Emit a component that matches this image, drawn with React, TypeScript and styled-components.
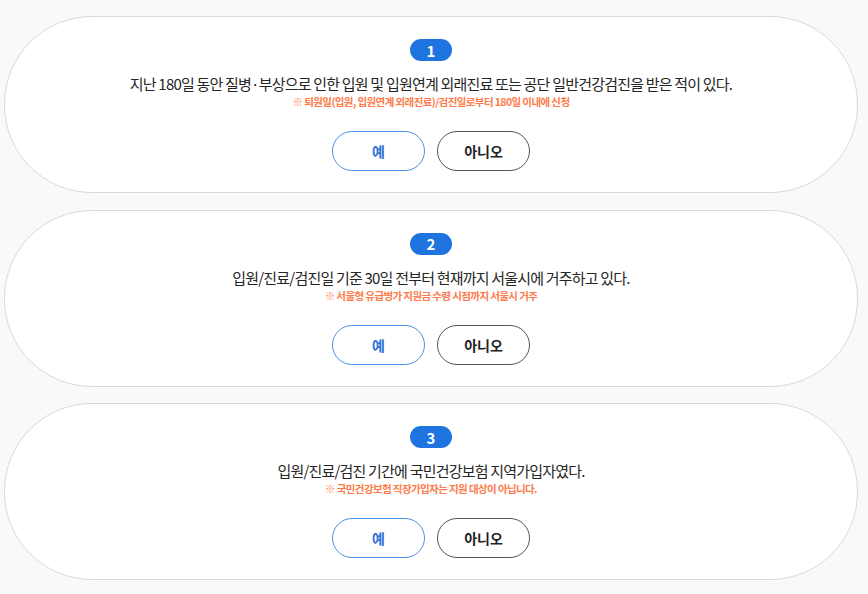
import React from "react";
import styled, { createGlobalStyle } from "styled-components";

const GlobalStyle = createGlobalStyle`
  html, body {
    margin: 0;
    padding: 0;
    background: #f9f9f9;
    font-family: "Noto Sans CJK KR", "Noto Sans", sans-serif;
  }
`;

const Page = styled.div`
  display: flex;
  flex-direction: column;
  gap: 16.5px;
  padding: 16px 10px 0 4px;
`;

const Card = styled.section`
  height: 177px;
  box-sizing: border-box;
  background: #fff;
  border: 1px solid #d9d9d9;
  border-radius: 88px;
  display: flex;
  flex-direction: column;
  align-items: center;
  padding-top: 22px;
`;

const Badge = styled.span`
  width: 42px;
  height: 22px;
  border-radius: 11px;
  background: #1f75e0;
  color: #fff;
  font-size: 15px;
  font-weight: 700;
  display: flex;
  align-items: center;
  justify-content: center;
`;

const Question = styled.p`
  margin: 13px 0 0;
  font-size: 15px;
  line-height: 20px;
  letter-spacing: -0.8px;
  color: #252525;
`;

const Note = styled.p`
  margin: 0;
  font-size: 10.5px;
  line-height: 15px;
  font-weight: 700;
  letter-spacing: -0.6px;
  color: #ff7a4a;
`;

const Actions = styled.div`
  display: flex;
  gap: 12px;
  margin-top: 22px;
`;

const Choice = styled.button<{ $primary?: boolean }>`
  width: 93px;
  height: 40px;
  box-sizing: border-box;
  border-radius: 20px;
  background: #fff;
  border: 1px solid ${(p) => (p.$primary ? "#4a90e6" : "#555")};
  color: ${(p) => (p.$primary ? "#2a6fd8" : "#222")};
  font-family: inherit;
  font-size: 14px;
  font-weight: 700;
  cursor: pointer;
`;

const questions = [
  {
    text: "지난 180일 동안 질병·부상으로 인한 입원 및 입원연계 외래진료 또는 공단 일반건강검진을 받은 적이 있다.",
    note: "※ 퇴원일(입원, 입원연계 외래진료)/검진일로부터 180일 이내에 신청",
  },
  {
    text: "입원/진료/검진일 기준 30일 전부터 현재까지 서울시에 거주하고 있다.",
    note: "※ 서울형 유급병가 지원금 수령 시점까지 서울시 거주",
  },
  {
    text: "입원/진료/검진 기간에 국민건강보험 지역가입자였다.",
    note: "※ 국민건강보험 직장가입자는 지원 대상이 아닙니다.",
  },
];

export default function App() {
  return (
    <>
      <GlobalStyle />
      <Page>
        {questions.map((q, i) => (
          <Card key={i}>
            <Badge>{i + 1}</Badge>
            <Question>{q.text}</Question>
            <Note>{q.note}</Note>
            <Actions>
              <Choice $primary>예</Choice>
              <Choice>아니오</Choice>
            </Actions>
          </Card>
        ))}
      </Page>
    </>
  );
}
